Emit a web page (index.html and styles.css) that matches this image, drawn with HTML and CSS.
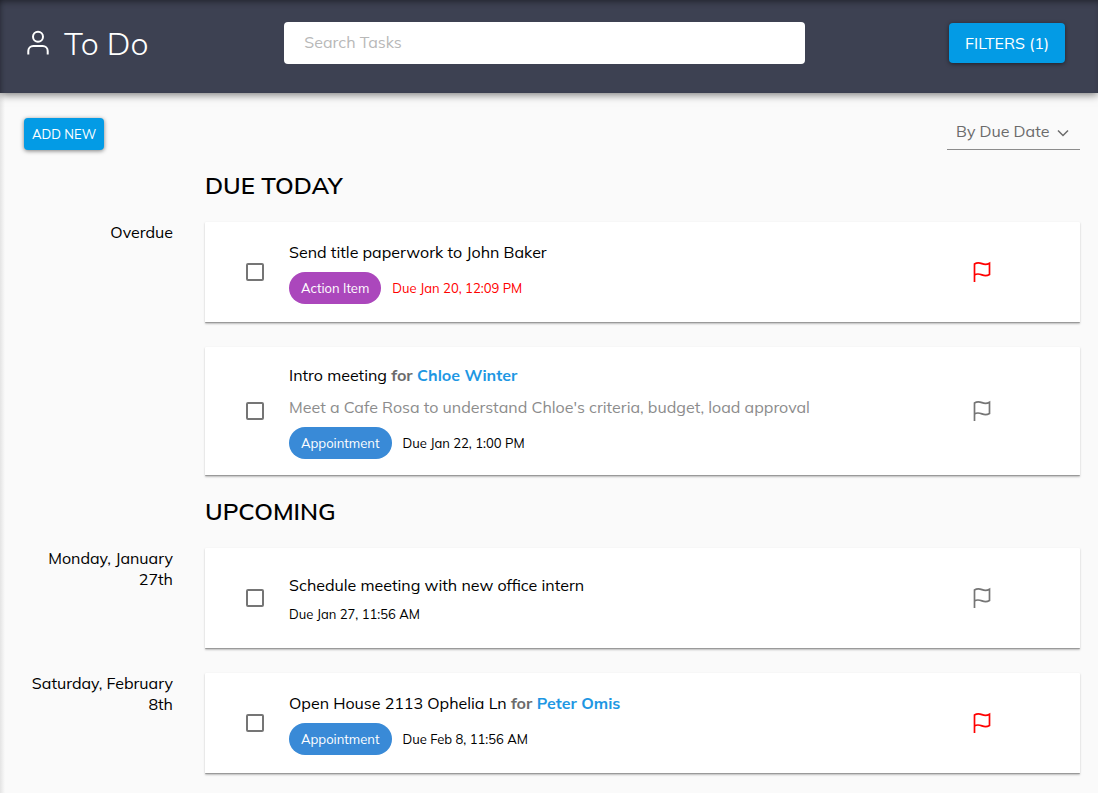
FILE: index.html
```html
<!DOCTYPE html>
<html lang="en">
<head>
<meta charset="utf-8">
<meta name="viewport" content="width=device-width, initial-scale=1">
<title>To Do</title>
<link rel="stylesheet" href="styles.css">
</head>
<body>
<svg class="sprite" aria-hidden="true">
  <symbol id="flag" viewBox="0 0 20 22"><path d="M2.500 21V3C5 1.300 7.500 1.600 10 2.600S15 3.600 17.500 2.200V13.500C15 15 12.500 14.900 10 13.900S5 12.300 2.500 14"/></symbol>
</svg>
<header class="topbar">
  <div class="brand">
    <svg class="brand-icon" viewBox="0 0 24 26" aria-hidden="true"><circle cx="12" cy="6.800" r="5"/><path d="M2.300 24.500v-3.500a5 5 0 0 1 5-5h9.400a5 5 0 0 1 5 5v3.500"/></svg>
    <h1 class="brand-title">To Do</h1>
  </div>
  <input class="search" type="search" placeholder="Search Tasks" aria-label="Search Tasks">
  <button class="button button-large" type="button">FILTERS (1)</button>
</header>
<main class="content">
  <div class="toolbar">
    <button class="button" type="button">ADD NEW</button>
    <div class="sort">
      <select class="sort-select" aria-label="Sort tasks">
        <option>By Due Date</option>
      </select>
      <svg class="sort-arrow" viewBox="0 0 12 8" aria-hidden="true"><path d="M1 1.500l5 5 5-5"/></svg>
    </div>
  </div>

  <section class="group">
    <h2 class="group-title">DUE TODAY</h2>
    <div class="label">Overdue</div>
    <article class="card">
      <input class="check" type="checkbox" aria-label="Send title paperwork to John Baker">
      <div class="details">
        <div class="title">Send title paperwork to John Baker</div>
        <div class="meta"><span class="chip chip-action">Action Item</span><span class="due due-late">Due Jan 20, 12:09 PM</span></div>
      </div>
      <button class="flag flag-on" type="button" aria-label="Flag"><svg class="flag-icon"><use href="#flag"/></svg></button>
    </article>
    <article class="card">
      <input class="check" type="checkbox" aria-label="Intro meeting for Chloe Winter">
      <div class="details">
        <div class="title">Intro meeting <b class="for">for <a class="person" href="#">Chloe Winter</a></b></div>
        <div class="note">Meet a Cafe Rosa to understand Chloe's criteria, budget, load approval</div>
        <div class="meta"><span class="chip">Appointment</span><span class="due">Due Jan 22, 1:00 PM</span></div>
      </div>
      <button class="flag" type="button" aria-label="Flag"><svg class="flag-icon"><use href="#flag"/></svg></button>
    </article>
  </section>

  <section class="group">
    <h2 class="group-title">UPCOMING</h2>
    <div class="label">Monday, January 27th</div>
    <article class="card">
      <input class="check" type="checkbox" aria-label="Schedule meeting with new office intern">
      <div class="details">
        <div class="title">Schedule meeting with new office intern</div>
        <div class="meta"><span class="due">Due Jan 27, 11:56 AM</span></div>
      </div>
      <button class="flag" type="button" aria-label="Flag"><svg class="flag-icon"><use href="#flag"/></svg></button>
    </article>
    <div class="label">Saturday, February 8th</div>
    <article class="card">
      <input class="check" type="checkbox" aria-label="Open House 2113 Ophelia Ln for Peter Omis">
      <div class="details">
        <div class="title">Open House 2113 Ophelia Ln <b class="for">for <a class="person" href="#">Peter Omis</a></b></div>
        <div class="meta"><span class="chip">Appointment</span><span class="due">Due Feb 8, 11:56 AM</span></div>
      </div>
      <button class="flag flag-on" type="button" aria-label="Flag"><svg class="flag-icon"><use href="#flag"/></svg></button>
    </article>
  </section>
</main>
</body>
</html>
```
FILE: styles.css
```css
* { box-sizing: border-box; }
body {
  margin: 0;
  min-height: 100vh;
  background: #fafafa;
  background-image: linear-gradient(to right, #e4e4e4, #fafafa 5px);
  color: #000;
  font: 16px/21px Muli, Mulish, "Open Sans", sans-serif;
}
button, input, select { font: inherit; }
.sprite { display: none; }

.topbar {
  display: grid;
  grid-template-columns: 1fr 2fr 1fr;
  align-items: start;
  min-height: 93px;
  padding: 22px 33px 0 24px;
  background: #3d4152;
  box-shadow: 0 2px 8px rgba(0, 0, 0, .5), inset 0 5px 6px -3px rgba(0, 0, 0, .4), inset 4px 0 5px -3px rgba(0, 0, 0, .25);
}
.brand { display: flex; align-items: center; gap: 14px; height: 42px; padding-left: 2px; }
.brand-icon { width: 24px; height: 26px; fill: none; stroke: #fff; stroke-width: 2; }
.brand-title { margin: 0; color: #fff; font-size: 32px; font-weight: 300; line-height: 42px; }
.search {
  width: 100%;
  height: 42px;
  padding: 0 20px 2px;
  border: 0;
  border-radius: 4px;
  background: #fff;
  appearance: none;
}
.search::placeholder { color: #b8b8b8; opacity: 1; }

.button {
  height: 32px;
  padding: 0 8px;
  border: 0;
  border-radius: 4px;
  background: #039be5;
  color: #fff;
  font-size: 13px;
  white-space: nowrap;
  box-shadow: 0 1px 4px rgba(0, 0, 0, .5);
}
.button-large { justify-self: end; height: 40px; margin-top: 1px; padding: 0 16px; font-size: 16px; }

.content { padding: 20px 18px 20px 24px; }
.toolbar { display: flex; justify-content: space-between; align-items: flex-end; height: 37px; }
.sort { display: grid; align-items: center; width: 133px; height: 37px; border-bottom: 1px solid #8c8c8c; }
.sort-select, .sort-arrow { grid-area: 1 / 1; }
.sort-select {
  height: 36px;
  padding: 0 28px 0 9px;
  border: 0;
  background: none;
  color: #6b6b6b;
  appearance: none;
}
.sort-arrow { justify-self: end; width: 12px; height: 8px; margin: 4px 11px 0 0; fill: none; stroke: #6b6b6b; stroke-width: 1.5; pointer-events: none; }

.group { display: grid; grid-template-columns: 149px minmax(0, 1fr); column-gap: 32px; row-gap: 24px; padding-top: 24px; }
.group-title { grid-column: 2; margin: 0 0 2px; font-size: 24px; font-weight: 600; line-height: 22px; }
.label { text-align: right; }
.card {
  grid-column: 2;
  display: flex;
  align-items: center;
  min-height: 101px;
  padding: 16px 87px 16px 41px;
  border-bottom: 1px solid #9a9a9a;
  border-radius: 1px;
  background: #fff;
  box-shadow: 0 1px 2px rgba(0, 0, 0, .25);
}
.check {
  flex: none;
  width: 18px;
  height: 18px;
  margin: 0 25px 0 0;
  border: 2px solid #757575;
  border-radius: 2px;
  appearance: none;
}
.check:checked { background: #757575; }
.details { display: grid; flex: 1; gap: 8px; min-width: 0; }
.title, .note { line-height: 24px; }
.note { color: #8c8c8c; }
.for { color: #6b6b6b; font-weight: 700; }
.person { color: #1e97e3; text-decoration: none; }
.meta { display: flex; align-items: center; gap: 11px; font-size: 13px; line-height: 18px; }
.chip { padding: 7px 12px; border-radius: 16px; background: #398ad7; color: #fff; }
.chip-action { background: #ab47bc; }
.due-late { color: #f00; }
.flag { flex: none; width: 22px; height: 24px; padding: 1px; border: 0; background: none; color: #757575; }
.flag-on { color: #f00; }
.flag-icon { display: block; width: 20px; height: 22px; fill: none; stroke: currentColor; stroke-width: 1.7; }
```
